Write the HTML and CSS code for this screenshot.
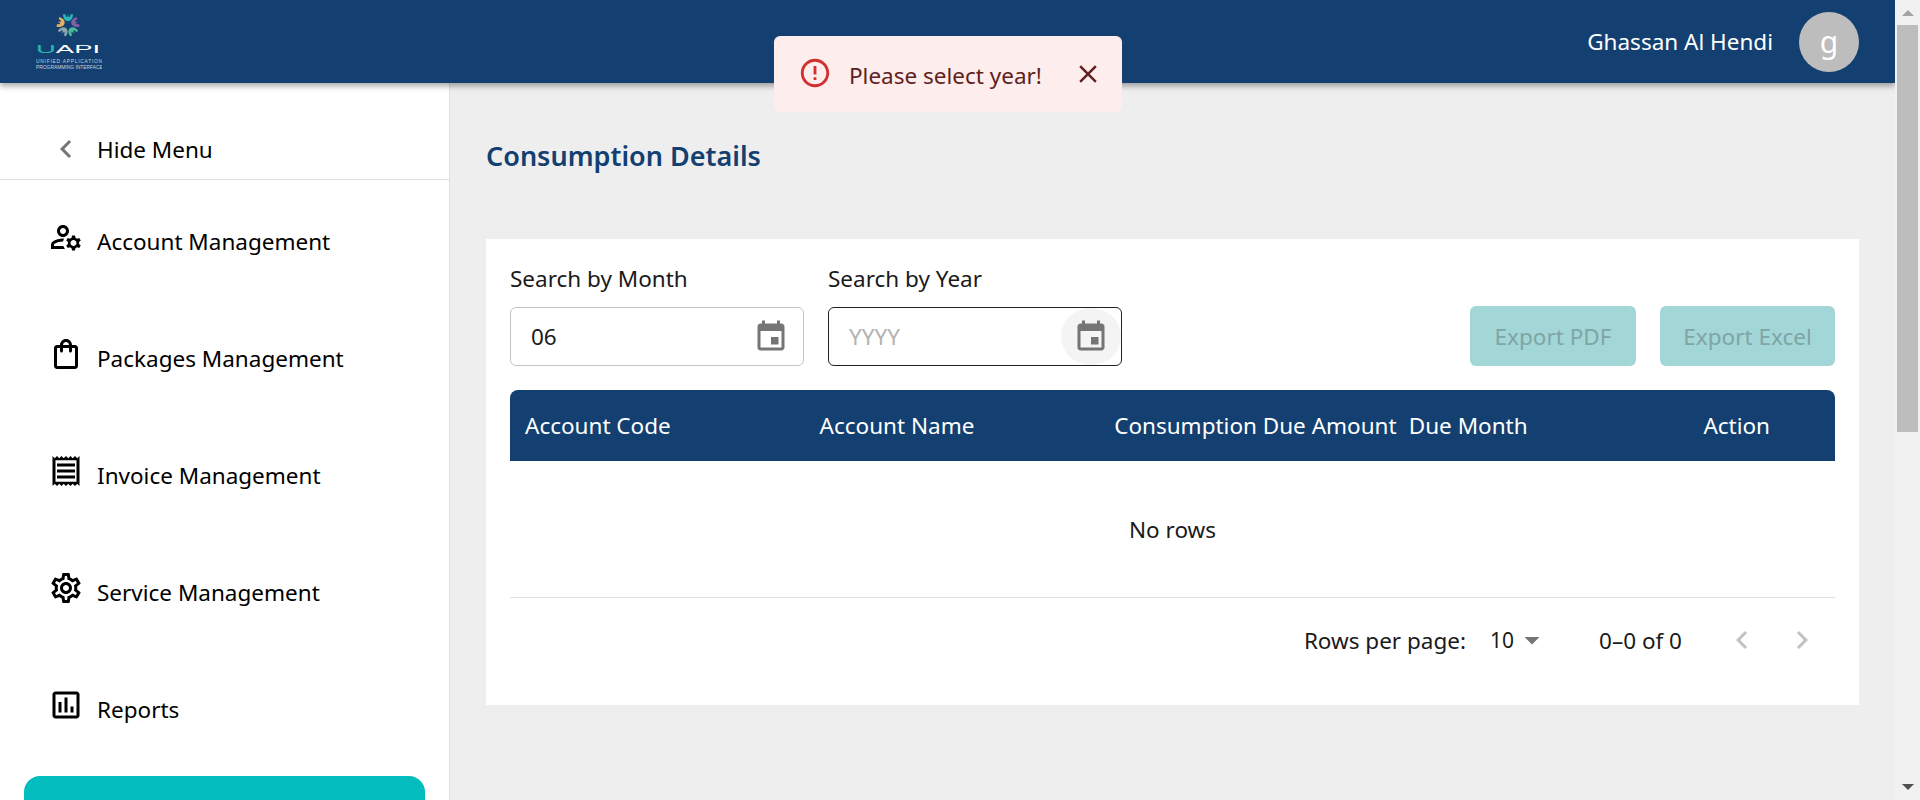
FILE: index.html
```html
<!DOCTYPE html>
<html lang="en">
<head>
<meta charset="UTF-8">
<meta name="viewport" content="width=device-width, initial-scale=1.0">
<title>Consumption Details</title>
<link rel="stylesheet" href="styles.css">
</head>
<body>
<div class="page">
  <header class="topbar">
    <svg class="logo" viewBox="0 0 66 60" width="66" height="60">
      <g transform="translate(32 13) scale(0.82)">
        <path fill="#2bb6b8" d="M-6 -13C-6 -7 -3 -4.500 0 -4.500C3 -4.500 6 -7 6 -13L3 -13C3 -10.500 2 -9.500 1 -9.500L0 -13L-1 -9.500C-2 -9.500 -3 -10.500 -3 -13Z"/>
        <path fill="#8560a8" transform="rotate(72)" d="M-6 -13C-6 -7 -3 -4.500 0 -4.500C3 -4.500 6 -7 6 -13L3 -13C3 -10.500 2 -9.500 1 -9.500L0 -13L-1 -9.500C-2 -9.500 -3 -10.500 -3 -13Z"/>
        <path fill="#4dbb95" transform="rotate(144)" d="M-6 -13C-6 -7 -3 -4.500 0 -4.500C3 -4.500 6 -7 6 -13L3 -13C3 -10.500 2 -9.500 1 -9.500L0 -13L-1 -9.500C-2 -9.500 -3 -10.500 -3 -13Z"/>
        <path fill="#8ea6ad" transform="rotate(216)" d="M-6 -13C-6 -7 -3 -4.500 0 -4.500C3 -4.500 6 -7 6 -13L3 -13C3 -10.500 2 -9.500 1 -9.500L0 -13L-1 -9.500C-2 -9.500 -3 -10.500 -3 -13Z"/>
        <path fill="#e4b05f" transform="rotate(288)" d="M-6 -13C-6 -7 -3 -4.500 0 -4.500C3 -4.500 6 -7 6 -13L3 -13C3 -10.500 2 -9.500 1 -9.500L0 -13L-1 -9.500C-2 -9.500 -3 -10.500 -3 -13Z"/>
      </g>
      <text class="logo-big" transform="translate(0 41) scale(2.5 1)"><tspan fill="#2bb6b8">U</tspan>API</text>
      <text class="logo-small logo-wide" y="51">UNIFIED APPLICATION</text>
      <text class="logo-small" y="57">PROGRAMMING INTERFACE</text>
    </svg>
    <div class="user">
      <span class="user-name">Ghassan Al Hendi</span>
      <span class="avatar">g</span>
    </div>
  </header>

  <div class="layout">
    <aside class="sidebar">
      <div class="hide-menu">
        <svg class="icon icon-grey" viewBox="0 0 24 24"><path d="M15.41 7.41 14 6l-6 6 6 6 1.41-1.41L10.83 12z"/></svg>
        <span>Hide Menu</span>
      </div>
      <nav>
        <a class="menu-item">
          <svg class="icon" viewBox="0 0 24 24"><path d="M4 18v-.65c0-.34.16-.66.41-.81C6.100 15.530 8.030 15 10 15c.03 0 .05 0 .08.01.1-.7.3-1.370.59-1.980-.22-.02-.44-.03-.67-.03-2.420 0-4.680.67-6.610 1.820-.88.52-1.390 1.500-1.390 2.530V20h9.260c-.42-.6-.75-1.280-.97-2H4zm6-6c2.210 0 4-1.790 4-4s-1.790-4-4-4-4 1.790-4 4 1.790 4 4 4zm0-6c1.100 0 2 .9 2 2s-.9 2-2 2-2-.9-2-2 .9-2 2-2z"/><path d="M20.750 16c0-.22-.03-.42-.06-.63l1.140-1.010-1-1.730-1.450.49c-.32-.27-.68-.48-1.080-.63L18 11h-2l-.3 1.490c-.4.15-.76.36-1.080.63l-1.450-.49-1 1.730 1.140 1.010c-.03.21-.06.41-.06.63s.03.42.06.63l-1.140 1.010 1 1.730 1.450-.49c.32.27.68.48 1.080.63L16 21h2l.3-1.490c.4-.15.76-.36 1.080-.63l1.450.49 1-1.730-1.140-1.010c.03-.21.06-.41.06-.63zM17 18c-1.100 0-2-.9-2-2s.9-2 2-2 2 .9 2 2-.9 2-2 2z"/></svg>
          <span>Account Management</span>
        </a>
        <a class="menu-item">
          <svg class="icon" viewBox="0 0 24 24"><path d="M18 6h-2c0-2.210-1.790-4-4-4S8 3.790 8 6H6c-1.100 0-2 .9-2 2v12c0 1.100.9 2 2 2h12c1.100 0 2-.9 2-2V8c0-1.100-.9-2-2-2zm-6-2c1.100 0 2 .9 2 2h-4c0-1.100.9-2 2-2zm6 16H6V8h2v2c0 .55.45 1 1 1s1-.45 1-1V8h4v2c0 .55.45 1 1 1s1-.45 1-1V8h2v12z"/></svg>
          <span>Packages Management</span>
        </a>
        <a class="menu-item">
          <svg class="icon" viewBox="0 0 24 24"><path d="M19.500 3.500 18 2l-1.500 1.500L15 2l-1.500 1.500L12 2l-1.500 1.500L9 2 7.500 3.500 6 2 4.500 3.500 3 2v20l1.500-1.500L6 22l1.500-1.500L9 22l1.500-1.500L12 22l1.500-1.500L15 22l1.500-1.500L18 22l1.500-1.500L21 22V2l-1.500 1.500zM19 19.090H5V4.910h14v14.180zM6 15h12v2H6zm0-4h12v2H6zm0-4h12v2H6z"/></svg>
          <span>Invoice Management</span>
        </a>
        <a class="menu-item">
          <svg class="icon" viewBox="0 0 24 24"><path d="M19.430 12.980c.04-.32.07-.64.07-.98 0-.34-.03-.66-.07-.98l2.110-1.650c.19-.15.24-.42.12-.64l-2-3.460c-.09-.16-.26-.25-.44-.25-.06 0-.12.01-.17.03l-2.490 1c-.52-.4-1.080-.73-1.690-.98l-.38-2.650C14.460 2.180 14.250 2 14 2h-4c-.25 0-.46.18-.49.42l-.38 2.650c-.61.25-1.170.59-1.690.98l-2.490-1c-.06-.02-.12-.03-.18-.03-.17 0-.34.09-.43.25l-2 3.460c-.13.22-.07.49.12.64l2.110 1.650c-.04.32-.07.65-.07.98 0 .33.03.66.07.98l-2.110 1.650c-.19.15-.24.42-.12.64l2 3.460c.09.16.26.25.44.25.06 0 .12-.01.17-.03l2.490-1c.52.4 1.080.73 1.690.98l.38 2.650c.03.24.24.42.49.42h4c.25 0 .46-.18.49-.42l.38-2.650c.61-.25 1.170-.59 1.690-.98l2.490 1c.06.02.12.03.18.03.17 0 .34-.09.43-.25l2-3.460c.12-.22.07-.49-.12-.64l-2.110-1.650zm-1.980-1.710c.04.31.05.52.05.73 0 .21-.02.43-.05.73l-.14 1.130.89.7 1.080.84-.7 1.210-1.270-.51-1.040-.42-.9.68c-.43.32-.84.56-1.250.73l-1.060.43-.16 1.130-.2 1.350h-1.400l-.19-1.350-.16-1.130-1.060-.43c-.43-.18-.83-.41-1.230-.71l-.91-.7-1.060.43-1.270.51-.7-1.210 1.080-.84.89-.7-.14-1.130c-.03-.31-.05-.54-.05-.74s.02-.43.05-.73l.14-1.130-.89-.7-1.080-.84.7-1.210 1.270.51 1.040.42.9-.68c.43-.32.84-.56 1.250-.73l1.060-.43.16-1.130.2-1.350h1.390l.19 1.350.16 1.130 1.060.43c.43.18.83.41 1.230.71l.91.7 1.060-.43 1.270-.51.7 1.210-1.070.85-.89.7.14 1.130zM12 8c-2.210 0-4 1.790-4 4s1.790 4 4 4 4-1.790 4-4-1.790-4-4-4zm0 6c-1.100 0-2-.9-2-2s.9-2 2-2 2 .9 2 2-.9 2-2 2z"/></svg>
          <span>Service Management</span>
        </a>
        <a class="menu-item">
          <svg class="icon" viewBox="0 0 24 24"><path d="M19 3H5c-1.100 0-2 .9-2 2v14c0 1.100.9 2 2 2h14c1.100 0 2-.9 2-2V5c0-1.100-.9-2-2-2zm0 16H5V5h14v14zM7 10h2v7H7zm4-3h2v10h-2zm4 6h2v4h-2z"/></svg>
          <span>Reports</span>
        </a>
      </nav>
      <div class="sidebar-action"></div>
    </aside>

    <main class="content">
      <h1 class="title">Consumption Details</h1>
      <section class="card">
        <div class="filters">
          <div class="field">
            <label>Search by Month</label>
            <div class="input">
              <span class="input-value">06</span>
              <svg class="icon icon-grey" viewBox="0 0 24 24"><path d="M17 12h-5v5h5v-5zM16 1v2H8V1H6v2H5c-1.110 0-1.990.9-1.990 2L3 19c0 1.100.89 2 2 2h14c1.100 0 2-.9 2-2V5c0-1.100-.9-2-2-2h-1V1h-2zm3 18H5V8h14v11z"/></svg>
            </div>
          </div>
          <div class="field">
            <label>Search by Year</label>
            <div class="input input-focus">
              <span class="input-placeholder">YYYY</span>
              <span class="icon-hover"><svg class="icon icon-grey" viewBox="0 0 24 24"><path d="M17 12h-5v5h5v-5zM16 1v2H8V1H6v2H5c-1.110 0-1.990.9-1.990 2L3 19c0 1.100.89 2 2 2h14c1.100 0 2-.9 2-2V5c0-1.100-.9-2-2-2h-1V1h-2zm3 18H5V8h14v11z"/></svg></span>
            </div>
          </div>
          <div class="exports">
            <button class="btn btn-pdf" disabled>Export PDF</button>
            <button class="btn btn-excel" disabled>Export Excel</button>
          </div>
        </div>

        <div class="table-head">
          <div>Account Code</div>
          <div>Account Name</div>
          <div>Consumption Due Amount</div>
          <div>Due Month</div>
          <div>Action</div>
        </div>
        <div class="table-empty">No rows</div>
        <div class="pager">
          <span>Rows per page:</span>
          <span class="pager-size">10</span>
          <svg class="caret" viewBox="0 0 24 24"><path d="M7 10l5 5 5-5z"/></svg>
          <span class="pager-count">0–0 of 0</span>
          <svg class="pager-arrow" viewBox="0 0 24 24"><path d="M15.41 7.41 14 6l-6 6 6 6 1.41-1.41L10.83 12z"/></svg>
          <svg class="pager-arrow pager-next" viewBox="0 0 24 24"><path d="M10 6 8.590 7.410 13.170 12l-4.580 4.590L10 18l6-6z"/></svg>
        </div>
      </section>
    </main>
  </div>

  <div class="toast">
    <svg class="toast-icon" viewBox="0 0 24 24"><path d="M11 15h2v2h-2zm0-8h2v6h-2zm.99-5C6.470 2 2 6.480 2 12s4.470 10 9.990 10C17.520 22 22 17.520 22 12S17.520 2 11.990 2zM12 20c-4.420 0-8-3.580-8-8s3.580-8 8-8 8 3.580 8 8-3.580 8-8 8z"/></svg>
    <span class="toast-text">Please select year!</span>
    <svg class="toast-close" viewBox="0 0 24 24"><path d="M19 6.410 17.590 5 12 10.590 6.410 5 5 6.410 10.590 12 5 17.590 6.410 19 12 13.410 17.590 19 19 17.590 13.410 12z"/></svg>
  </div>
</div>

<div class="scrollbar">
  <span class="scroll-up"></span>
  <span class="scroll-thumb"></span>
  <span class="scroll-spacer"></span>
  <span class="scroll-down"></span>
</div>
</body>
</html>
```

FILE: styles.css
```css
html, body {
  height: 100%;
}
body {
  margin: 0;
  display: flex;
  overflow: hidden;
  font-family: "Noto Sans", "Open Sans", sans-serif;
  font-size: 22.5px;
  color: #1a1a1a;
  background-color: #eeeeee;
}
.page {
  position: relative;
  flex: 1;
  min-width: 0;
  display: flex;
  flex-direction: column;
  overflow: hidden;
}

/* top bar */
.topbar {
  position: relative;
  z-index: 2;
  flex: none;
  height: 83px;
  box-sizing: border-box;
  padding: 0 36px;
  display: flex;
  align-items: center;
  justify-content: space-between;
  background-color: #134070;
  color: #fff;
  box-shadow: 0 3px 6px rgba(0, 0, 0, 0.35);
}
.logo-big {
  font-family: "Liberation Sans", sans-serif;
  font-size: 11px;
  fill: #fff;
}
.logo-small {
  font-family: "Liberation Sans", sans-serif;
  font-size: 4.900px;
  fill: #c9d3de;
}
.logo-wide {
  letter-spacing: 0.75px;
}
.user {
  display: flex;
  align-items: center;
  gap: 26px;
}
.avatar {
  width: 60px;
  height: 60px;
  border-radius: 50%;
  background-color: #bdbdbd;
  display: flex;
  align-items: center;
  justify-content: center;
  font-size: 30px;
}

/* sidebar */
.layout {
  flex: 1;
  display: flex;
  min-height: 0;
}
.sidebar {
  flex: none;
  width: 449px;
  background-color: #fff;
  border-right: 1px solid #e0e0e0;
  color: #000;
}
.hide-menu {
  height: 97px;
  box-sizing: border-box;
  padding: 36px 0 0 48px;
  display: flex;
  align-items: center;
  gap: 13px;
  border-bottom: 1px solid #e0e0e0;
}
nav {
  padding-top: 3px;
}
.menu-item {
  height: 117px;
  padding-left: 48px;
  display: flex;
  align-items: center;
  gap: 13px;
}
.menu-item .icon {
  margin-top: -10px;
}
.sidebar-action {
  height: 60px;
  margin: 8px 24px 0;
  background-color: #03bcbd;
  border-radius: 16px;
}
.icon {
  flex: none;
  width: 36px;
  height: 36px;
  fill: #000;
}
.icon-grey {
  fill: #757575;
}

/* main */
.content {
  flex: 1;
  min-width: 0;
  padding: 0 36px;
}
.title {
  margin: 0;
  padding: 54px 0 64px;
  font-size: 27px;
  line-height: 38px;
  font-weight: 600;
  color: #134070;
}
.card {
  background-color: #fff;
  padding: 24px 24px 23px;
}
.filters {
  display: flex;
  align-items: flex-end;
  gap: 24px;
}
.field label {
  display: block;
  margin-bottom: 12px;
  line-height: 32px;
}
.input {
  width: 294px;
  height: 59px;
  box-sizing: border-box;
  padding: 0 14px 0 20px;
  display: flex;
  align-items: center;
  justify-content: space-between;
  border: 1px solid #c4c4c4;
  border-radius: 6px;
}
.input-focus {
  border-color: #222;
  padding-right: 0;
}
.input-placeholder {
  color: #b3b3b3;
}
.icon-hover {
  width: 60px;
  height: 57px;
  display: flex;
  align-items: center;
  justify-content: center;
  border-radius: 50%;
  background-color: #f4f4f4;
}
.exports {
  margin-left: auto;
  display: flex;
  gap: 24px;
}
.btn {
  height: 60px;
  border: none;
  border-radius: 6px;
  font-family: inherit;
  font-size: 22.5px;
  background-color: #a3d6d6;
  color: #7fa5a5;
}
.btn-pdf {
  width: 166px;
}
.btn-excel {
  width: 175px;
}

/* table */
.table-head {
  margin-top: 24px;
  height: 71px;
  display: grid;
  grid-template-columns: repeat(5, 294.6px);
  align-items: center;
  overflow: hidden;
  background-color: #134070;
  border-radius: 8px 8px 0 0;
  color: #fff;
}
.table-head div {
  padding-left: 15px;
  white-space: nowrap;
}
.table-empty {
  height: 136px;
  display: flex;
  align-items: center;
  justify-content: center;
  border-bottom: 1px solid #e0e0e0;
}
.pager {
  height: 84px;
  display: flex;
  align-items: center;
  justify-content: flex-end;
}
.pager-size {
  margin-left: 24px;
  font-size: 21px;
}
.caret {
  width: 36px;
  height: 36px;
  fill: #757575;
}
.pager-count {
  margin-left: 49px;
}
.pager-arrow {
  width: 36px;
  height: 36px;
  margin-left: 42px;
  fill: #c2c2c2;
}
.pager-next {
  margin: 0 15px 0 24px;
}

/* toast */
.toast {
  position: absolute;
  z-index: 3;
  top: 36px;
  left: 774px;
  width: 348px;
  height: 76px;
  box-sizing: border-box;
  padding-left: 24px;
  display: flex;
  align-items: center;
  background-color: #fdeded;
  border-radius: 6px;
  color: #5f2120;
}
.toast-icon {
  width: 34px;
  height: 34px;
  margin-top: -2px;
  fill: #d32f2f;
}
.toast-text {
  margin: 2px 0 0 17px;
}
.toast-close {
  width: 30px;
  height: 30px;
  margin-left: 31px;
  fill: #5f2120;
}

/* window scrollbar */
.scrollbar {
  flex: none;
  width: 25px;
  display: flex;
  flex-direction: column;
  align-items: center;
  background-color: #f1f1f1;
}
.scroll-up,
.scroll-down {
  flex: none;
  width: 0;
  height: 0;
  margin: 10px 0;
  border-left: 6px solid transparent;
  border-right: 6px solid transparent;
}
.scroll-up {
  border-bottom: 6px solid #a3a3a3;
  margin-bottom: 9px;
}
.scroll-down {
  border-top: 6px solid #505050;
}
.scroll-thumb {
  flex: none;
  width: 21px;
  height: 407px;
  background-color: #bdbdbd;
}
.scroll-spacer {
  flex: 1;
}
```
